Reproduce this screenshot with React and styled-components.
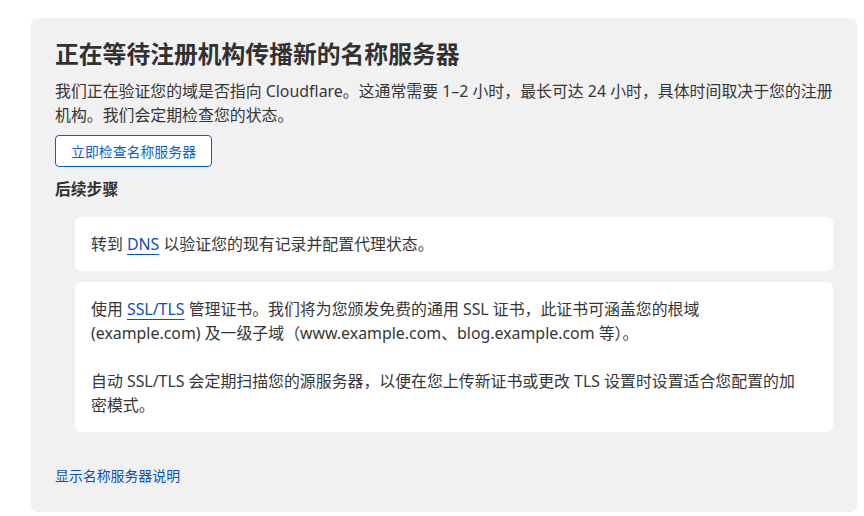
import styled, { createGlobalStyle } from 'styled-components';

const Global = createGlobalStyle`
    body {
        margin: 0;
        background: #ffffff;
        font-family: "Noto Sans", "Noto Sans CJK SC", sans-serif;
        color: #313131;
    }
`;

const Page = styled.div`
    padding: 18px 7px 0 31px;
`;

const Panel = styled.section`
    background: #f2f1f2;
    border-radius: 6px;
    padding: 20px 24px 26px 24px;
`;

const Title = styled.h2`
    margin: 0;
    font-size: 23.8px;
    line-height: 32px;
    font-weight: 700;
    color: #313131;
`;

const Text = styled.p`
    margin: ${p => p.$gap || 0} 0 0 0;
    font-size: 15.9px;
    line-height: 24px;
    color: #363636;
`;

const Button = styled.button`
    margin-top: 8px;
    height: 32px;
    padding: 0 15px;
    background: #ffffff;
    border: 1px solid #0b5fd6;
    border-radius: 4px;
    color: #0b5fd6;
    font-family: inherit;
    font-size: 13.9px;
    cursor: pointer;
`;

const Subtitle = styled.h3`
    margin: 10px 0 0 0;
    font-size: 15.8px;
    line-height: 24px;
    font-weight: 700;
    color: #313131;
`;

const Steps = styled.div`
    margin: 16px 0 0 20px;
    display: flex;
    flex-direction: column;
    gap: 11px;
`;

const Card = styled.div`
    background: #ffffff;
    border-radius: 6px;
    padding: 15px 25px 15px 16px;
`;

const Link = styled.a`
    color: #0b4fb8;
    text-decoration: underline;
    text-underline-offset: 4px;
    cursor: pointer;
`;

const Footer = styled.a`
    display: inline-block;
    margin-top: 34px;
    font-size: 13.9px;
    line-height: 20px;
    color: #0b4fb8;
    cursor: pointer;
`;

const App = () => {
    return (
    <Page>
        <Global />
        <Panel>
            <Title>正在等待注册机构传播新的名称服务器</Title>
            <Text $gap="9px">我们正在验证您的域是否指向 Cloudflare。这通常需要 1–2 小时，最长可达 24 小时，具体时间取决于您的注册机构。我们会定期检查您的状态。</Text>
            <Button>立即检查名称服务器</Button>
            <Subtitle>后续步骤</Subtitle>
            <Steps>
                <Card>
                    <Text>转到 <Link>DNS</Link> 以验证您的现有记录并配置代理状态。</Text>
                </Card>
                <Card>
                    <Text>使用 <Link>SSL/TLS</Link> 管理证书。我们将为您颁发免费的通用 SSL 证书，此证书可涵盖您的根域 (example.com) 及一级子域（www.example.com、blog.example.com 等）。</Text>
                    <Text $gap="24px">自动 SSL/TLS 会定期扫描您的源服务器，以便在您上传新证书或更改 TLS 设置时设置适合您配置的加密模式。</Text>
                </Card>
            </Steps>
            <Footer>显示名称服务器说明</Footer>
        </Panel>
    </Page>
    );
}

export default App;
